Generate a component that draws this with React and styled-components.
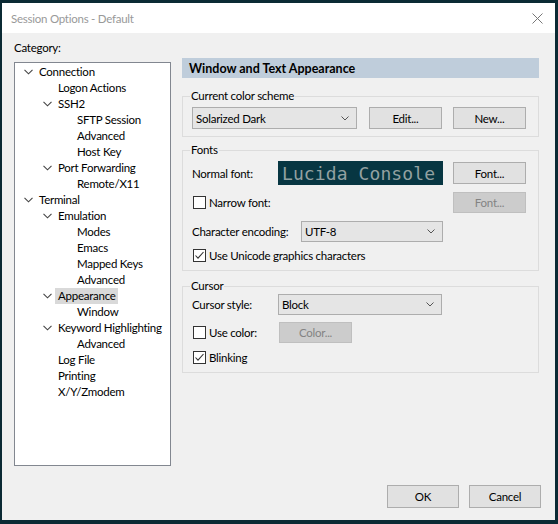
import React from "react";
import styled, { createGlobalStyle } from "styled-components";

const Global = createGlobalStyle`
  html, body { margin: 0; padding: 0; background: #0b2a34; }
  body { font-family: Lato, "Noto Sans", sans-serif; font-size: 11.5px; letter-spacing: -0.25px; color: #000; }
  * { box-sizing: border-box; }
`;

const Screen = styled.div`
  width: 558px;
  height: 524px;
  padding: 3px 3px 4px 2px;
  background: #0b2a34;
`;

const Window = styled.div`
  width: 553px;
  height: 517px;
  background: #f0f0f0;
  display: flex;
  flex-direction: column;
`;

const TitleBar = styled.div`
  height: 30px;
  background: #fff;
  display: flex;
  align-items: center;
  justify-content: space-between;
  padding: 0 12px 0 9px;
  color: #999;
`;

const Body = styled.div`
  flex: 1;
  display: flex;
  flex-direction: column;
  padding: 7px 14px 12px 12px;
`;

const Columns = styled.div`
  display: grid;
  grid-template-columns: 157px 357px;
  column-gap: 11px;
  align-items: start;
`;

const LeftCol = styled.div`
  display: flex;
  flex-direction: column;
`;

const CatLabel = styled.div`
  line-height: 16px;
  height: 16px;
`;

const TreeBox = styled.div`
  margin-top: 6px;
  height: 404px;
  background: #fff;
  border: 1px solid #828790;
  padding-top: 1px;
`;

const TreeRow = styled.div`
  height: 16px;
  display: flex;
  align-items: center;
  padding-left: ${(p) => 9 + p.$depth * 19}px;
`;

const Arrow = styled.span`
  width: 15px;
  height: 16px;
  display: flex;
  align-items: center;
  flex: none;
`;

const TreeText = styled.span`
  line-height: 16px;
  height: 16px;
  margin-left: -3px;
  padding: 0 2px 0 3px;
  white-space: nowrap;
  background: ${(p) => (p.$selected ? "#d9d9d9" : "transparent")};
`;

const RightCol = styled.div`
  display: flex;
  flex-direction: column;
  padding-top: 18px;
`;

const Header = styled.div`
  height: 20px;
  background: #bfcddb;
  font-weight: bold;
  font-size: 12.5px;
  letter-spacing: 0;
  display: flex;
  align-items: center;
  padding-left: 7px;
`;

const Group = styled.fieldset`
  margin: ${(p) => p.$mt}px 0 0 0;
  border: 1px solid #dcdcdc;
  padding: ${(p) => p.$pt || 0}px 12px ${(p) => p.$pb}px 9px;
  min-width: 0;
`;

const Legend = styled.legend`
  padding: 0 1px;
  margin-left: -2px;
  line-height: 16px;
  height: 16px;
`;

const Row = styled.div`
  display: flex;
  align-items: center;
  margin-top: ${(p) => p.$mt || 0}px;
  height: ${(p) => p.$h}px;
`;

const Label = styled.span`
  width: ${(p) => p.$w}px;
  flex: none;
  white-space: nowrap;
`;

const Select = styled.div`
  width: ${(p) => p.$w}px;
  height: ${(p) => p.$h || 21}px;
  margin-right: ${(p) => p.$mr || 0}px;
  background: #e5e5e5;
  border: 1px solid #adadad;
  display: flex;
  align-items: center;
  justify-content: space-between;
  padding: 0 7px 0 3px;
  flex: none;
`;

const Button = styled.div`
  width: ${(p) => p.$w || 73}px;
  height: ${(p) => p.$h || 22}px;
  margin-left: ${(p) => (p.$auto ? "auto" : `${p.$ml || 0}px`)};
  background: ${(p) => (p.$disabled ? "#cccccc" : "#e1e1e1")};
  border: 1px solid ${(p) => (p.$disabled ? "#bfbfbf" : "#adadad")};
  color: ${(p) => (p.$disabled ? "#838383" : "#000")};
  display: flex;
  align-items: center;
  justify-content: center;
  flex: none;
`;

const FontBox = styled.div`
  width: 165px;
  height: 24px;
  background: #073642;
  color: #93a1a1;
  font-family: "DejaVu Sans Mono", "Liberation Mono", monospace;
  font-size: 18px;
  letter-spacing: 0.1px;
  display: flex;
  align-items: center;
  padding-left: 4px;
  flex: none;
`;

const CheckWrap = styled.label`
  display: flex;
  align-items: center;
  gap: 3px;
  margin-left: 1px;
  white-space: nowrap;
`;

const Box = styled.span`
  width: 13px;
  height: 13px;
  border: 1px solid #333;
  background: #fff;
  display: flex;
  align-items: center;
  justify-content: center;
  flex: none;
`;

const Footer = styled.div`
  margin-top: auto;
  display: flex;
  justify-content: flex-end;
  gap: 10px;
`;

const Chevron = ({ color = "#555" }) => (
  <svg width="9" height="6" viewBox="0 0 9 6">
    <path d="M0.5 0.8 L4.5 4.8 L8.5 0.8" fill="none" stroke={color} strokeWidth="1.1" />
  </svg>
);

const SmallChevron = () => (
  <svg width="8" height="5" viewBox="0 0 8 5">
    <path d="M0.5 0.5 L4 4 L7.5 0.5" fill="none" stroke="#555" strokeWidth="1" />
  </svg>
);

const Check = ({ checked, children }) => (
  <CheckWrap>
    <Box>
      {checked && (
        <svg width="11" height="11" viewBox="0 0 11 11">
          <path d="M1.5 5.5 L4 8.2 L9.5 2" fill="none" stroke="#333" strokeWidth="1.1" />
        </svg>
      )}
    </Box>
    <span>{children}</span>
  </CheckWrap>
);

const tree = [
  ["Connection", 0, true],
  ["Logon Actions", 1],
  ["SSH2", 1, true],
  ["SFTP Session", 2],
  ["Advanced", 2],
  ["Host Key", 2],
  ["Port Forwarding", 1, true],
  ["Remote/X11", 2],
  ["Terminal", 0, true],
  ["Emulation", 1, true],
  ["Modes", 2],
  ["Emacs", 2],
  ["Mapped Keys", 2],
  ["Advanced", 2],
  ["Appearance", 1, true, true],
  ["Window", 2],
  ["Keyword Highlighting", 1, true],
  ["Advanced", 2],
  ["Log File", 1],
  ["Printing", 1],
  ["X/Y/Zmodem", 1],
];

export default function App() {
  return (
    <>
      <Global />
      <Screen>
        <Window>
          <TitleBar>
            <span>Session Options - Default</span>
            <svg width="11" height="11" viewBox="0 0 11 11">
              <path d="M0.5 0.5 L10.5 10.5 M10.5 0.5 L0.5 10.5" stroke="#777" strokeWidth="1" />
            </svg>
          </TitleBar>
          <Body>
            <Columns>
              <LeftCol>
                <CatLabel>Category:</CatLabel>
                <TreeBox>
                  {tree.map(([name, depth, exp, sel], i) => (
                    <TreeRow key={i} $depth={depth}>
                      <Arrow>{exp && <Chevron color="#444" />}</Arrow>
                      <TreeText $selected={sel}>{name}</TreeText>
                    </TreeRow>
                  ))}
                </TreeBox>
              </LeftCol>
              <RightCol>
                <Header>Window and Text Appearance</Header>
                <Group $mt={10} $pt={3} $pb={7}>
                  <Legend>Current color scheme</Legend>
                  <Row $h={22}>
                    <Select $w={165} $h={22} $mr={12}>
                      <span>Solarized Dark</span>
                      <SmallChevron />
                    </Select>
                    <Button>Edit...</Button>
                    <Button $ml={11}>New...</Button>
                  </Row>
                </Group>
                <Group $mt={5} $pt={3} $pb={7}>
                  <Legend>Fonts</Legend>
                  <Row $h={24}>
                    <Label $w={86}>Normal font:</Label>
                    <FontBox>Lucida Console</FontBox>
                    <Button $ml={10}>Font...</Button>
                  </Row>
                  <Row $h={21} $mt={7}>
                    <Check>Narrow font:</Check>
                    <Button $auto $disabled $h={21}>Font...</Button>
                  </Row>
                  <Row $h={21} $mt={8}>
                    <Label $w={109}>Character encoding:</Label>
                    <Select $w={142}>
                      <span>UTF-8</span>
                      <SmallChevron />
                    </Select>
                  </Row>
                  <Row $h={16} $mt={5}>
                    <Check checked>Use Unicode graphics characters</Check>
                  </Row>
                </Group>
                <Group $mt={7} $pt={0} $pb={7}>
                  <Legend>Cursor</Legend>
                  <Row $h={21}>
                    <Label $w={86}>Cursor style:</Label>
                    <Select $w={164}>
                      <span>Block</span>
                      <SmallChevron />
                    </Select>
                  </Row>
                  <Row $h={21} $mt={7}>
                    <Label $w={87}>
                      <Check>Use color:</Check>
                    </Label>
                    <Button $disabled $h={21}>Color...</Button>
                  </Row>
                  <Row $h={16} $mt={6}>
                    <Check checked>Blinking</Check>
                  </Row>
                </Group>
              </RightCol>
            </Columns>
            <Footer>
              <Button $w={72} $h={23}>OK</Button>
              <Button $w={72} $h={23}>Cancel</Button>
            </Footer>
          </Body>
        </Window>
      </Screen>
    </>
  );
}
